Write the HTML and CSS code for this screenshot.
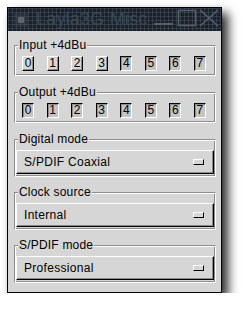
FILE: index.html
```html
<!DOCTYPE html>
<html lang="en">
<head>
    <meta charset="UTF-8">
    <title>Layla3G Misc controls</title>
    <link rel="stylesheet" href="styles.css">
</head>
<body>
    <div class="window">
        <div class="titlebar">
            <span class="tb-icon"></span>
            <span class="title">Layla3G Misc c</span>
            <svg class="tb-buttons" width="70" height="23" viewBox="0 0 70 23">
                <rect x="3" y="15" width="19" height="2" fill="#56616c"/>
                <rect x="27.5" y="2.5" width="17" height="15" fill="none" stroke="#56616c" stroke-width="1.5"/>
                <path d="M49 2 L67 18 M67 2 L49 18" stroke="#56616c" stroke-width="1.5" fill="none"/>
            </svg>
        </div>
        <div class="content">
            <fieldset class="frame">
                <legend>Input +4dBu</legend>
                <div class="toggles">
                    <button class="toggle">0</button>
                    <button class="toggle">1</button>
                    <button class="toggle">2</button>
                    <button class="toggle">3</button>
                    <button class="toggle on">4</button>
                    <button class="toggle on">5</button>
                    <button class="toggle on">6</button>
                    <button class="toggle on">7</button>
                </div>
            </fieldset>

            <fieldset class="frame">
                <legend>Output +4dBu</legend>
                <div class="toggles">
                    <button class="toggle on">0</button>
                    <button class="toggle on">1</button>
                    <button class="toggle on">2</button>
                    <button class="toggle on">3</button>
                    <button class="toggle on">4</button>
                    <button class="toggle on">5</button>
                    <button class="toggle on">6</button>
                    <button class="toggle on">7</button>
                </div>
            </fieldset>

            <fieldset class="frame menu-frame">
                <legend>Digital mode</legend>
                <button class="option">S/PDIF Coaxial<span class="indicator"></span></button>
            </fieldset>

            <fieldset class="frame menu-frame">
                <legend>Clock source</legend>
                <button class="option">Internal<span class="indicator"></span></button>
            </fieldset>

            <fieldset class="frame menu-frame">
                <legend>S/PDIF mode</legend>
                <button class="option">Professional<span class="indicator"></span></button>
            </fieldset>
        </div>
    </div>
</body>
</html>
```

FILE: styles.css
```css
body {
    margin: 0;
    background: #fff;
    font-family: "Liberation Sans", Arial, sans-serif;
    font-size: 12px;
}
.window {
    box-sizing: border-box;
    width: 215px;
    height: 286px;
    margin: 7px 0 0 7px;
    border: 1px solid #000;
    background: #d6d6d6;
    box-shadow: 6px 6px 10px rgba(0, 0, 0, 0.85);
}
.titlebar {
    display: flex;
    align-items: center;
    height: 23px;
    background-color: #1a2129;
    background-image:
        linear-gradient(90deg, rgba(90, 105, 120, 0.35) 1px, transparent 1px),
        linear-gradient(rgba(90, 105, 120, 0.35) 1px, transparent 1px);
    background-size: 4px 4px;
}
.tb-icon {
    width: 6px;
    height: 6px;
    margin: 0 12px 0 10px;
    background: #5d646c;
    box-shadow: 0 0 0 4px rgba(70, 80, 90, 0.35);
}
.title {
    flex: 1;
    overflow: hidden;
    white-space: nowrap;
    font-size: 18px;
    line-height: 23px;
    color: #3b4857;
    letter-spacing: 0.2px;
}
.tb-buttons {
    display: block;
    flex: none;
}
.content {
    padding: 7px 5px 0 6px;
}
.frame {
    margin: 0 0 9px;
    padding: 4px 1px 4px;
    border: 1px solid;
    border-color: #8c8c8c #fff #fff #8c8c8c;
    box-shadow: inset 1px 1px 0 #fff, inset -1px -1px 0 #8c8c8c;
}
.menu-frame {
    margin-bottom: 8px;
    padding-bottom: 2px;
}
.frame legend {
    margin-left: 2px;
    padding: 0 1px;
    line-height: 14px;
    background: #d6d6d6;
    letter-spacing: 0.2px;
}
.toggles {
    display: flex;
    justify-content: space-between;
    padding: 0 8px 0 6px;
}
.toggle {
    box-sizing: border-box;
    width: 12px;
    height: 15px;
    padding: 0;
    font-family: inherit;
    font-size: 12px;
    line-height: 13px;
    color: #000;
    background: #d6d6d6;
    border: 1px solid;
    border-color: #fff #000 #000 #fff;
    box-shadow: inset -1px -1px 0 #8c8c8c;
}
.toggle.on {
    background: #c4c4c4;
    border-color: #000 #fff #fff #000;
    box-shadow: inset 1px 1px 0 #8c8c8c;
}
.option {
    display: flex;
    align-items: center;
    justify-content: space-between;
    box-sizing: border-box;
    width: 100%;
    height: 24px;
    padding: 0 9px 0 7px;
    font-family: inherit;
    font-size: 12px;
    letter-spacing: 0.3px;
    color: #000;
    text-align: left;
    background: #d6d6d6;
    border: 1px solid;
    border-color: #fff #000 #000 #fff;
    box-shadow: inset -1px -1px 0 #8c8c8c;
}
.indicator {
    box-sizing: border-box;
    width: 11px;
    height: 6px;
    border: 1px solid;
    border-color: #fff #000 #000 #fff;
    background: #d6d6d6;
}
```
